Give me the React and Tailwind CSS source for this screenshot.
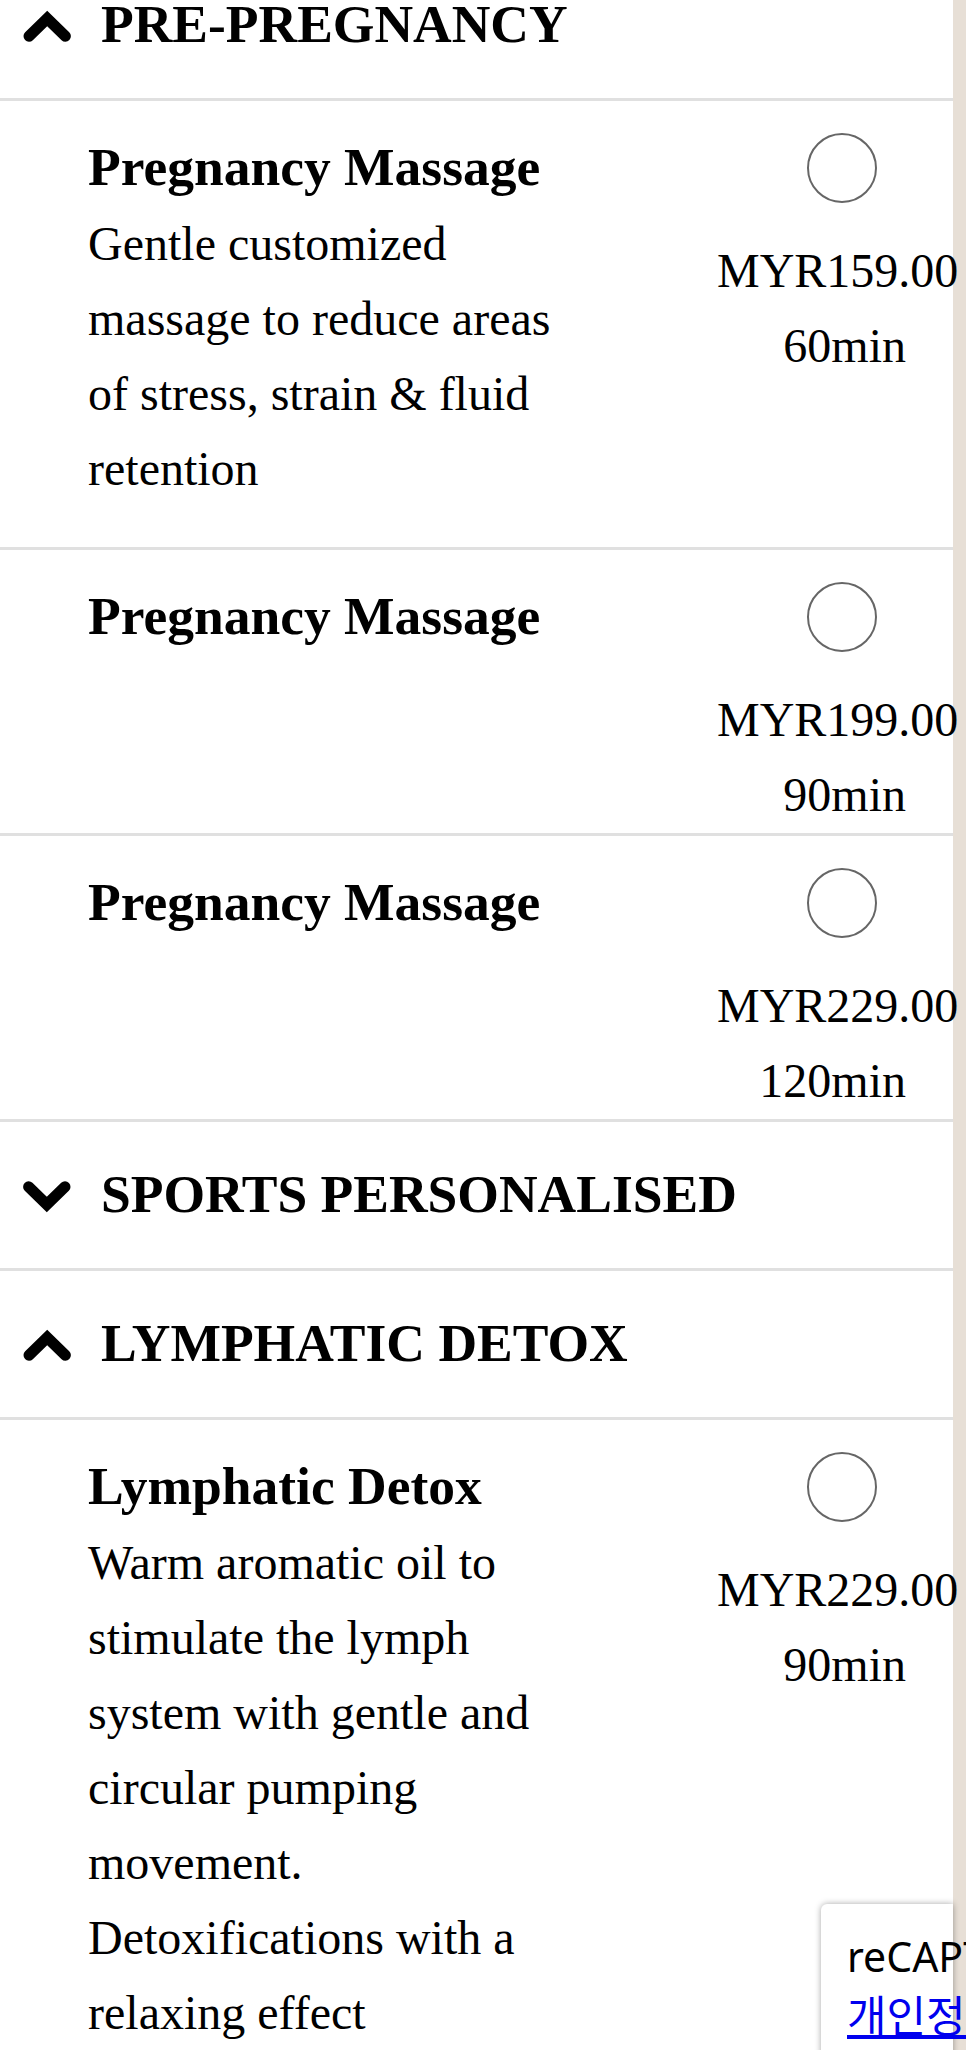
import React from "react";

const serif = { fontFamily: '"Liberation Serif", "Times New Roman", serif' };

const sections = [
  {
    title: "PRE-PREGNANCY",
    open: true,
    items: [
      {
        name: "Pregnancy Massage",
        desc: "Gentle customized massage to reduce areas of stress, strain & fluid retention",
        price: "MYR159.00",
        duration: "60min",
      },
      { name: "Pregnancy Massage", price: "MYR199.00", duration: "90min" },
      { name: "Pregnancy Massage", price: "MYR229.00", duration: "120min" },
    ],
  },
  { title: "SPORTS PERSONALISED", open: false, items: [] },
  {
    title: "LYMPHATIC DETOX",
    open: true,
    items: [
      {
        name: "Lymphatic Detox",
        desc: "Warm aromatic oil to stimulate the lymph system with gentle and circular pumping movement. Detoxifications with a relaxing effect",
        price: "MYR229.00",
        duration: "90min",
      },
    ],
  },
];

function Chevron({ open }) {
  return (
    <svg
      width="48"
      height="31"
      viewBox="0 0 48 31"
      className={`mt-[17px] shrink-0 overflow-visible ${open ? "" : "rotate-180"}`}
    >
      <polyline
        points="6,25.2 24.2,7.5 42.4,25.2"
        fill="none"
        stroke="#000"
        strokeWidth="11"
        strokeLinecap="round"
        strokeLinejoin="miter"
      />
    </svg>
  );
}

function SectionHeader({ title, open }) {
  return (
    <div className="flex items-start border-b-[3px] border-[#e0e0e0] pt-[42px] pb-[44px] pl-[23px]">
      <Chevron open={open} />
      <span className="ml-[30px] text-[53.5px] leading-[60px] font-bold text-black whitespace-nowrap">
        {title}
      </span>
    </div>
  );
}

function ServiceRow({ item }) {
  return (
    <div className="flex border-b-[3px] border-[#e0e0e0] pt-[27px] pb-[1px] pl-[88px]">
      <div className="w-[490px] shrink-0">
        <p className="text-[53.5px] leading-[78px] font-bold text-black">{item.name}</p>
        {item.desc && (
          <p className="mb-[40px] text-[48px] leading-[75px] text-black">{item.desc}</p>
        )}
      </div>
      <div className="ml-[139px] w-[189px] shrink-0 text-right">
        <div className="mt-[5px] ml-[90px] h-[70px] w-[70px] rounded-full border-[2.5px] border-[#666] bg-white" />
        <p className="mt-[30px] text-[48px] leading-[75px] text-black whitespace-nowrap">
          {item.price}
        </p>
        <p className="text-[48px] leading-[75px] text-black whitespace-nowrap">{item.duration}</p>
      </div>
    </div>
  );
}

export default function App() {
  return (
    <div className="relative h-[2050px] w-full overflow-hidden bg-[#e7dfd6]" style={serif}>
      <div className="-mt-[48px] w-[953px] bg-white pb-[400px]">
        {sections.map((section) => (
          <div key={section.title}>
            <SectionHeader title={section.title} open={section.open} />
            {section.open && section.items.map((item, i) => <ServiceRow key={i} item={item} />)}
          </div>
        ))}
      </div>

      {/* recaptcha badge, pinned bottom-right */}
      <div
        className="absolute left-[821px] top-[1904px] h-[200px] w-[132px] rounded-tl-[6px] bg-white pl-[26px] pt-[28px] shadow-[0_0_6px_rgba(0,0,0,0.35)]"
        style={{ fontFamily: '"Noto Sans", "Noto Sans CJK KR", sans-serif' }}
      >
        <p className="text-[41px] leading-[48px] text-black whitespace-nowrap">reCAPTCHA</p>
        <a href="#" className="mt-[12px] block text-[43px] leading-[48px] text-[#0000ee] underline whitespace-nowrap">
          개인정보 보호 - 약관
        </a>
      </div>
    </div>
  );
}
